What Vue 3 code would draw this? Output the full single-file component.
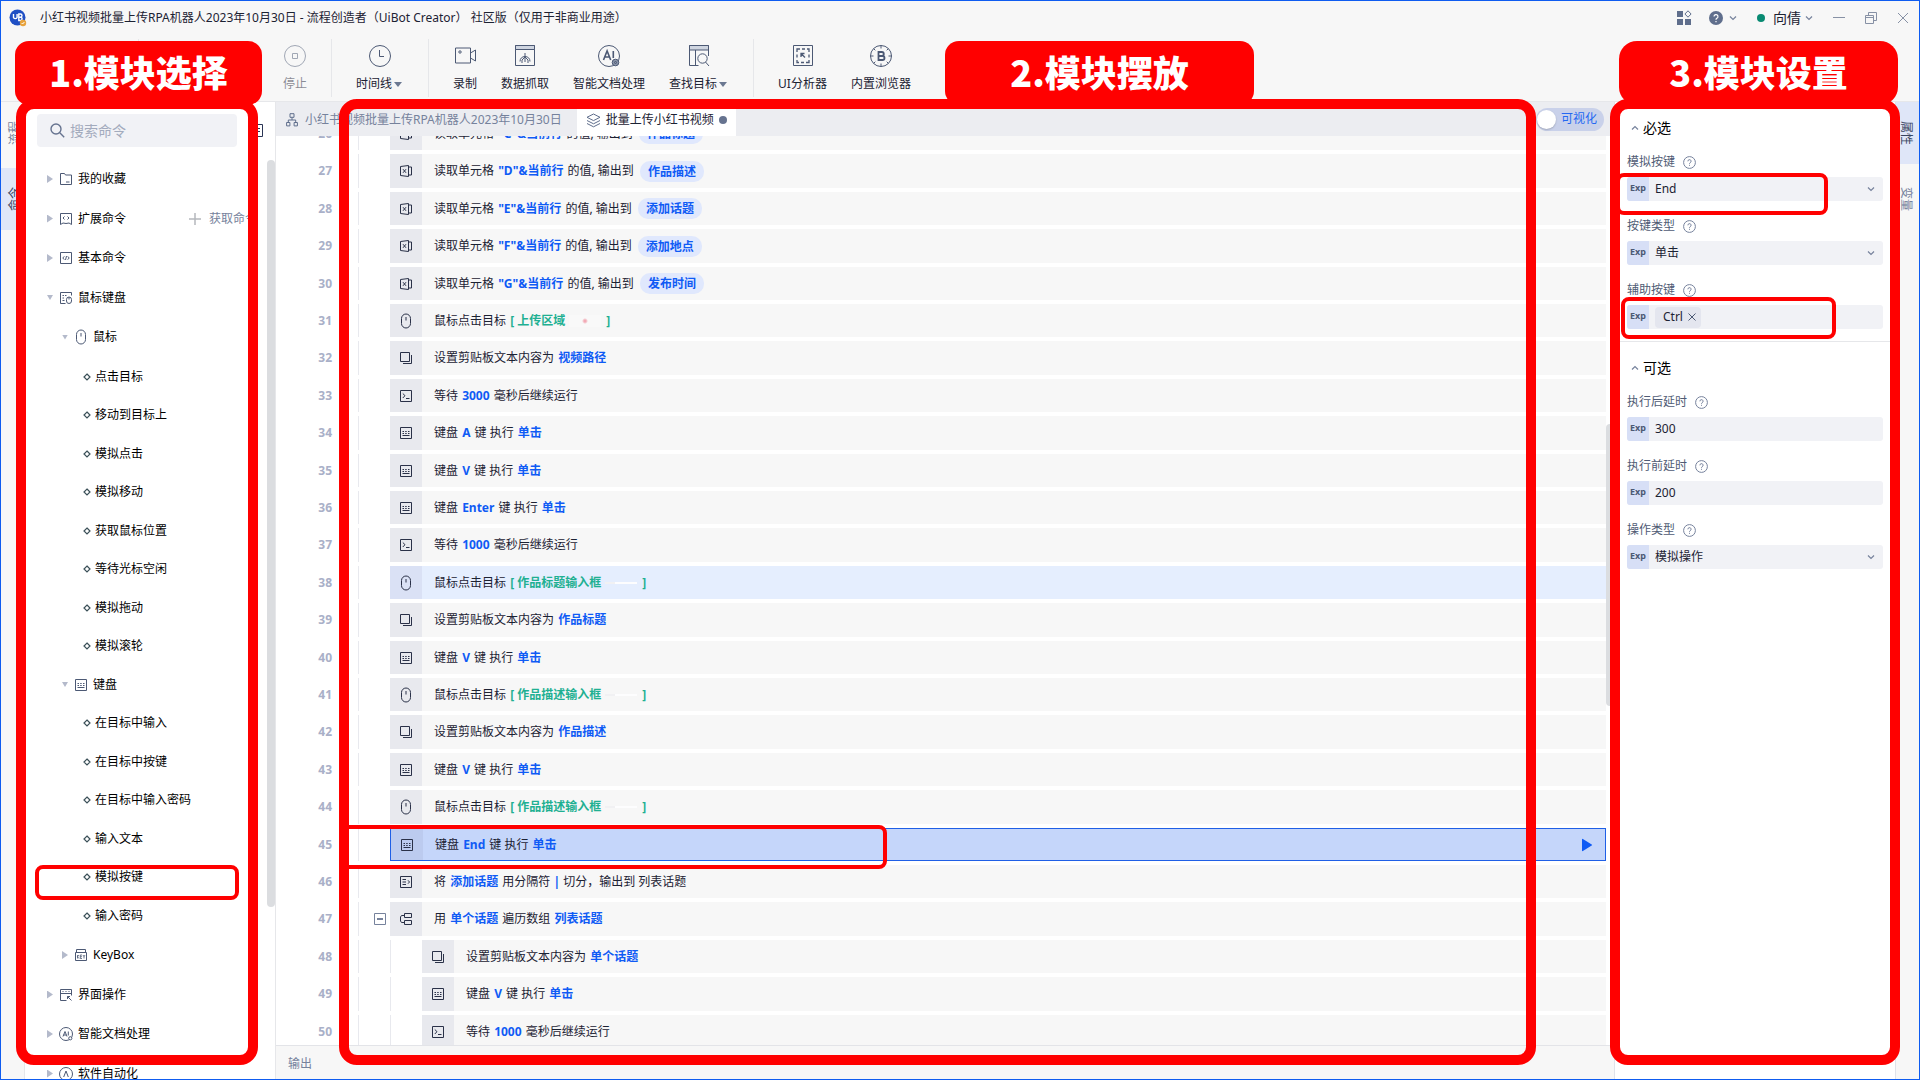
<template>
  <div class="window">
    <header class="titlebar">
      <svg class="logo" viewBox="0 0 18 18">
        <circle cx="8.5" cy="8.5" r="8" fill="#1f4fc4" />
        <path d="M4.5 5v3.5a2 2 0 0 0 3.6 0V5M9.8 11.5V5h1.6a1.6 1.6 0 0 1 0 3.2H9.8h2a1.7 1.7 0 0 1 0 3.3z" fill="none" stroke="#fff" stroke-width="1.4" />
        <circle cx="14" cy="14" r="3.2" fill="#e8a33d" />
        <path d="m12.6 14 1 1 1.8-2" fill="none" stroke="#fff" />
      </svg>
      <h1 class="title">小红书视频批量上传RPA机器人2023年10月30日 - 流程创造者（UiBot Creator） 社区版（仅用于非商业用途）</h1>
      <div class="title-actions">
        <button class="plain" aria-label="apps">
          <svg width="16" height="16" viewBox="0 0 16 16" fill="#5f6e8c">
            <path d="M1 1h6v6H1zM1 9h6v6H1zM9 9h6v6H9z" />
            <path d="m12 .8 3.1 3.2L12 7.2 8.9 4z" fill="none" stroke="#5f6e8c" />
          </svg>
        </button>
        <button class="plain help" aria-label="help">
          <svg width="14" height="14" viewBox="0 0 14 14">
            <circle cx="7" cy="7" r="7" fill="#5f6e8c" />
            <path d="M5 5.6a2 2 0 1 1 2.8 1.8c-.6.3-.8.5-.8 1.3M7 10v1.2" fill="none" stroke="#fff" stroke-width="1.2" />
          </svg>
          <svg class="chev" viewBox="0 0 8 8" v-html="icons.down"></svg>
        </button>
        <button class="plain user">
          <i class="online"></i>向倩
          <svg class="chev" viewBox="0 0 8 8" v-html="icons.down"></svg>
        </button>
        <button class="plain win" aria-label="minimize">
          <svg width="12" height="12" viewBox="0 0 12 12"><path d="M0 5.5h12" /></svg>
        </button>
        <button class="plain win" aria-label="restore">
          <svg width="12" height="12" viewBox="0 0 12 12"><path d="M.5 3.5h8v8h-8zM.5 5.5h8M3.5 3V.5h8v8H9" /></svg>
        </button>
        <button class="plain win" aria-label="close">
          <svg width="12" height="12" viewBox="0 0 12 12"><path d="m1 1 10 10M11 1 1 11" /></svg>
        </button>
      </div>
    </header>

    <nav class="toolbar">
      <i class="sep"></i>
      <span class="tool-slot"></span>
      <template v-for="(tool, i) in tools" :key="i">
        <i v-if="tool.sep" class="sep"></i>
        <button v-else class="tool" :class="{ disabled: tool.disabled }">
          <svg viewBox="0 0 24 24" v-html="icons[tool.icon]"></svg>
          <span class="tool-label">{{ tool.label }}<i v-if="tool.menu" class="tri"></i></span>
        </button>
      </template>
    </nav>

    <div class="body">
      <div class="rail rail-left">
        <button class="rail-tab">流程</button>
        <button class="rail-tab active">命令</button>
      </div>

      <aside class="commands">
        <div class="search-row">
          <label class="search">
            <svg width="15" height="15" viewBox="0 0 15 15" fill="none" stroke="#66738f" stroke-width="1.4">
              <circle cx="6" cy="6" r="5" /><path d="m9.8 9.8 4.4 4.4" />
            </svg>
            <input type="text" placeholder="搜索命令" aria-label="搜索命令" />
          </label>
          <button class="plain collapse" aria-label="collapse">
            <svg width="13" height="13" viewBox="0 0 13 13"><path d="M.5.5h12v12H.5zM5 4.500h5M5 7.500h5" /></svg>
          </button>
        </div>
        <ul class="tree">
          <li v-for="node in tree" :key="node.label" class="tree-row" :class="['level-' + node.level, node.level < 3 ? 'group' : 'leaf']">
            <i v-if="node.level < 3" class="caret" :class="{ open: node.open }"></i>
            <svg v-if="node.level < 3" class="node-icon" viewBox="0 0 12 12" v-html="icons[node.icon]"></svg>
            <svg v-else class="diamond" viewBox="0 0 8 8"><path d="m4 1 3 3-3 3-3-3z" /></svg>
            <span>{{ node.label }}</span>
            <button v-if="node.action" class="plain get-more">
              <svg width="12" height="12" viewBox="0 0 12 12"><path d="M6 0v12M0 6h12" /></svg>
              {{ node.action }}
            </button>
          </li>
        </ul>
        <i class="scrollbar side-bar"></i>
      </aside>

      <main class="editor">
        <div class="tabs">
          <button class="tab">
            <svg width="12" height="14" viewBox="0 0 12 14"><path d="M4 .7h4v3.600H4zM.6 9.500h3.300v3.400H.6zM8.100 9.500h3.300v3.400H8.100zM6 4.300V7M2.300 9.500V7h7.400v2.500" /></svg>
            小红书视频批量上传RPA机器人2023年10月30日
          </button>
          <button class="tab current">
            <svg width="15" height="15" viewBox="0 0 15 15"><path d="m7.500 1 6.500 3.300-6.500 3.300L1 4.300zM1 7.500l6.500 3.300L14 7.500M1 10.500l6.500 3.300 6.500-3.300" /></svg>
            批量上传小红书视频
            <i class="unsaved"></i>
          </button>
          <label class="visual"><input type="checkbox" />可视化</label>
        </div>

        <div class="canvas">
          <ol class="lines">
            <li v-for="line in lines" :key="line.no" class="line" :class="line.state">
              <span class="no">{{ line.no }}</span>
              <span class="gutter">
                <button v-if="line.fold" class="plain fold" aria-label="fold">
                  <svg width="12" height="12" viewBox="0 0 12 12"><path d="M.5.5h11v11H.5z" /><path d="M3 6h6" stroke-width="2" /></svg>
                </button>
              </span>
              <span v-if="line.nested" class="gutter nested"></span>
              <div class="block">
                <span class="block-icon">
                  <svg viewBox="0 0 12 12" v-html="icons[line.icon]"></svg>
                </span>
                <p class="text">
                  <span v-for="(part, i) in line.parts" :key="i" :class="part[1]">{{ part[0] }}</span>
                </p>
                <button v-if="line.state === 'selected'" class="plain run" aria-label="run">
                  <svg width="12" height="14" viewBox="0 0 12 14"><path d="M1 1.500v11a.6.6 0 0 0 .9.500l8.800-5.400a.7.7 0 0 0 0-1.200L1.900 1a.6.6 0 0 0-.9.500z" fill="#0f5bf5" /></svg>
                </button>
              </div>
            </li>
          </ol>
          <i class="scrollbar editor-bar"></i>
        </div>
        <footer class="output">输出</footer>
      </main>

      <aside class="props">
        <section v-for="group in groups" :key="group.title" class="prop-group">
          <h2><svg class="chev up" viewBox="0 0 8 8" v-html="icons.down"></svg>{{ group.title }}</h2>
          <div v-for="field in group.fields" :key="field.id" class="field">
            <div class="field-label">
              <label :for="field.id">{{ field.label }}</label>
              <svg width="13" height="13" viewBox="0 0 13 13" fill="none" stroke="#76829c">
                <circle cx="6.500" cy="6.500" r="5.900" />
                <path d="M4.900 5.300a1.600 1.600 0 1 1 2.300 1.400c-.5.300-.7.500-.7 1.100M6.500 8.800v1" />
              </svg>
            </div>
            <div class="control">
              <span class="exp">Exp</span>
              <template v-if="field.type === 'select'">
                <select :id="field.id"><option>{{ field.value }}</option></select>
                <svg class="chev" viewBox="0 0 8 8" v-html="icons.down"></svg>
              </template>
              <template v-else-if="field.type === 'tags'">
                <span class="tag">{{ field.value }}
                  <button class="plain" aria-label="remove"><svg width="8" height="8" viewBox="0 0 8 8"><path d="m.5.500 7 7M7.500.500l-7 7" /></svg></button>
                </span>
                <input :id="field.id" type="text" />
              </template>
              <input v-else :id="field.id" type="text" :value="field.value" />
            </div>
          </div>
        </section>
      </aside>

      <div class="rail rail-right">
        <button class="rail-tab active">属性</button>
        <button class="rail-tab">变量</button>
      </div>
    </div>

    <!-- tutorial marks over the window -->
    <div class="marks">
      <div class="badge badge-1">1.模块选择</div>
      <div class="badge badge-2">2.模块摆放</div>
      <div class="badge badge-3">3.模块设置</div>
      <i class="frame frame-1"></i>
      <i class="box box-command"></i>
      <i class="box box-line"></i>
      <i class="frame frame-2"></i>
      <i class="box box-key"></i>
      <i class="box box-modifier"></i>
      <i class="frame frame-3"></i>
    </div>
  </div>
</template>

<script setup>
const icons = {
  down: '<path d="m1 2.500 3 3 3-3"/>',
  stop: '<circle cx="12" cy="12" r="10.500"/><path d="M9.500 9.500h5v5h-5z"/>',
  clock: '<circle cx="12" cy="12" r="10.500"/><path d="M11.500 6v6.500H16"/>',
  record: '<path d="M2.500 4h15v15h-15zM17.500 9l5-3v11l-5-3"/><circle cx="7" cy="8" r="1.200"/>',
  grab: '<path d="M2.500 1.500h19v20h-19z"/><path d="M2.500 1.500h19v4h-19z" fill="#cfd5e0"/><path d="M12 9v5M9 19v-3l3-3 3 3v3M12 14v4M7 17.500c0-3 2-5 5-5s5 2 5 5"/>',
  ai: '<circle cx="12" cy="12" r="10.500"/><path d="m6.500 16 3.600-9 3.600 9M7.700 13h4.800M16.300 7v7" stroke-width="1.600"/><circle cx="18.500" cy="18.500" r="3.300" fill="#8a94a8"/><circle cx="18.500" cy="18.500" r="1"/>',
  find: '<path d="M21.500 12V1.500h-19v20h9M8.500 6v15.500"/><path d="M2.500 1.500h19v4.500h-19z" fill="#cfd5e0"/><circle cx="15.500" cy="14.500" r="4.700"/><path d="m18.500 18 3.500 4"/>',
  analyze: '<path d="M2.500 1.500h19v20h-19z"/><path d="M6 8V5h3M11 5h3M16 5h2v3M18 10.500v3M18 16v2.500h-3M13 18.500h-3M8 18.500H6V16M6 13.500v-3M10 13V9.500h3.500M10 9.500l4 4" stroke-width="1.300"/>',
  browser: '<circle cx="12" cy="12" r="10.500"/><path d="M9.500 8h3.300a2 2 0 0 1 0 4H9.500zM9.500 12h4a2 2 0 0 1 0 4h-4z" stroke-width="1.800"/><path d="M12 1.500v3M12 19.500v3M1.500 12h3M19.500 12h3M4.600 4.600l1.700 1.700M17.700 17.700l1.700 1.700M4.600 19.400l1.700-1.700M17.700 6.300l1.700-1.700"/>',
  folder: '<path d="M.5.500h4l1 1.500h6v9.500H.5zM6 9h3.500"/>',
  extend: '<path d="M.5.500h11v11l-2.500-1.500-3 .500-3-.500L.5 11.500zM4.500 3.500 3 5l1.500 1.500M7.500 3.500 9 5 7.500 6.500"/>',
  basic: '<path d="M.5.500h11v11H.5zM4.300 4.300 2.800 6l1.500 1.700M7.700 4.300 9.200 6 7.700 7.700M6.500 4l-1 4"/>',
  keymouse: '<path d="M5.500 11.500h-5V.500h11v3M2.500 3.500h1.500M5 3.500h1.500M2.500 6h1.500M2.500 8.500h2"/><rect x="6.500" y="5" width="5" height="6.500" rx="2.500"/><path d="M9 5v2.500"/>',
  mouse: '<rect x="1.500" y="-1" width="9" height="14" rx="4.500"/><path d="M6 2v3.500"/>',
  keyboard: '<path d="M.5.500h11v11H.5z"/><path d="M2.500 4.500h1.500M5.200 4.500h1.500M8 4.500h1.500M2.500 6.500h1.500M5.200 6.500h1.500M8 6.500h1.500M2.500 8.500h7"/>',
  keybox: '<path d="M.5 3.500h11v8H.5zM1.500 3.500V.500h9v3"/><path d="M2.500 6v3.500M2.500 7.800l1.500-1.800M2.500 7.800l1.500 1.700M7 6H5.300v3.500H7M5.300 7.700H7M8 6l1 1.700L10 6M9 7.700v1.800" stroke-width=".8"/>',
  ui: '<path d="M6.500 11.500h-6V.500h11v6M.5 4.500h11M2.500 2.500h1M5.500 2.500h1M8.500 2.500h1M7.500 7.500l4 4M7.500 10V7.500H10"/>',
  doc: '<circle cx="6" cy="6" r="6.500"/><path d="m3 8.500 2-5 2 5M3.700 7h2.600M8.300 3.500v4"/><circle cx="10.300" cy="10.300" r="1.600" fill="#fff"/>',
  soft: '<circle cx="6" cy="6" r="6.500"/><path d="m3.700 9 2.300-6 2.300 6"/>',
  excel: '<path d="M8.500.500l-8 1v9l8 1zM8.500 2h3v8h-3"/><path d="m3 4.200 3 3.600M6 4.200 3 7.800"/>',
  clip: '<path d="M.5.500h9v9h-9zM3 11.500h8.500V3"/>',
  wait: '<path d="M.5.500h11v11H.5zM2.800 3.500 5 5.700 2.800 8M6 8.500h3.500"/>',
  split: '<path d="M.5.500h11v11H.5zM2.500 3.500h3.500M2.500 6h3.500M2.500 8.500h3.500M8 4.300 9.500 6 8 7.700"/>',
  loop: '<path d="M4.500.500h7v4h-7zM4.500 7.500h7v4h-7zM4.500 2.500h-3l-1 1.500v4l1 1.500h3"/>'
}

const tools = [
  { label: '停止', icon: 'stop', disabled: true },
  { sep: true },
  { label: '时间线', icon: 'clock', menu: true },
  { sep: true },
  { label: '录制', icon: 'record' },
  { label: '数据抓取', icon: 'grab' },
  { label: '智能文档处理', icon: 'ai' },
  { label: '查找目标', icon: 'find', menu: true },
  { sep: true },
  { label: 'UI分析器', icon: 'analyze' },
  { label: '内置浏览器', icon: 'browser' }
]

const leaf = (label) => ({ level: 3, label })

const tree = [
  { level: 1, label: '我的收藏', icon: 'folder' },
  { level: 1, label: '扩展命令', icon: 'extend', action: '获取命令' },
  { level: 1, label: '基本命令', icon: 'basic' },
  { level: 1, label: '鼠标键盘', icon: 'keymouse', open: true },
  { level: 2, label: '鼠标', icon: 'mouse', open: true },
  ...['点击目标', '移动到目标上', '模拟点击', '模拟移动', '获取鼠标位置', '等待光标空闲', '模拟拖动', '模拟滚轮'].map(leaf),
  { level: 2, label: '键盘', icon: 'keyboard', open: true },
  ...['在目标中输入', '在目标中按键', '在目标中输入密码', '输入文本', '模拟按键', '输入密码'].map(leaf),
  { level: 2, label: 'KeyBox', icon: 'keybox' },
  { level: 1, label: '界面操作', icon: 'ui' },
  { level: 1, label: '智能文档处理', icon: 'doc' },
  { level: 1, label: '软件自动化', icon: 'soft' }
]

const read = (cell, name) => ({
  icon: 'excel',
  parts: [['读取单元格 '], [`"${cell}"&当前行`, 'var'], [' 的值, 输出到 '], [name, 'pill']]
})
const click = (target, state) => ({
  icon: 'mouse',
  state,
  parts: [['鼠标点击目标 '], ['[ ' + target, 'target'], ['', 'thumb'], [']', 'target']]
})
const clip = (name) => ({ icon: 'clip', parts: [['设置剪贴板文本内容为 '], [name, 'var']] })
const wait = (ms) => ({ icon: 'wait', parts: [['等待 '], [ms, 'var'], [' 毫秒后继续运行']] })
const press = (key, state) => ({
  icon: 'keyboard',
  state,
  parts: [['键盘 '], [key, 'var'], [' 键 执行 '], ['单击', 'var']]
})

const lines = [
  read('C', '作品标题'),
  read('D', '作品描述'),
  read('E', '添加话题'),
  read('F', '添加地点'),
  read('G', '发布时间'),
  { ...click('上传区域'), parts: [['鼠标点击目标 '], ['[ 上传区域', 'target'], ['', 'thumb dot'], [']', 'target']] },
  clip('视频路径'),
  wait('3000'),
  press('A'),
  press('V'),
  press('Enter'),
  wait('1000'),
  click('作品标题输入框', 'hover'),
  clip('作品标题'),
  press('V'),
  click('作品描述输入框'),
  clip('作品描述'),
  press('V'),
  click('作品描述输入框'),
  press('End', 'selected'),
  { icon: 'split', parts: [['将 '], ['添加话题', 'var'], [' 用分隔符 '], ['|', 'bar'], [' 切分，输出到 列表话题']] },
  { icon: 'loop', fold: true, parts: [['用 '], ['单个话题', 'var'], [' 遍历数组 '], ['列表话题', 'var']] },
  { ...clip('单个话题'), nested: true },
  { ...press('V'), nested: true },
  { ...wait('1000'), nested: true }
].map((line, i) => ({ no: 26 + i, ...line }))

const groups = [
  {
    title: '必选',
    fields: [
      { id: 'key', label: '模拟按键', type: 'select', value: 'End' },
      { id: 'keyType', label: '按键类型', type: 'select', value: '单击' },
      { id: 'modifier', label: '辅助按键', type: 'tags', value: 'Ctrl' }
    ]
  },
  {
    title: '可选',
    fields: [
      { id: 'delayAfter', label: '执行后延时', type: 'text', value: '300' },
      { id: 'delayBefore', label: '执行前延时', type: 'text', value: '200' },
      { id: 'mode', label: '操作类型', type: 'select', value: '模拟操作' }
    ]
  }
]
</script>

<style>
body {
  margin: 0;
  overflow: hidden;
}
</style>

<style scoped>
* {
  box-sizing: border-box;
}

.window {
  position: relative;
  display: flex;
  flex-direction: column;
  height: 100vh;
  border: 1px solid #0f5cf0;
  overflow: hidden;
  background: #f7f7f7;
  color: #1c2233;
  font: 12px/16px "Noto Sans", "Noto Sans CJK SC", sans-serif;
}

button,
input,
select {
  font: inherit;
  color: inherit;
  border: 0;
  padding: 0;
  background: none;
  outline: none;
}

i {
  display: block;
}

ul,
ol,
p,
h1,
h2 {
  margin: 0;
  padding: 0;
  list-style: none;
  font-weight: normal;
}

svg {
  display: block;
  flex-shrink: 0;
}

.plain {
  display: flex;
  align-items: center;
}

.chev {
  width: 8px;
  height: 8px;
  fill: none;
  stroke: #76829c;
  stroke-width: 1.200;
}

.titlebar {
  display: flex;
  align-items: center;
  flex-shrink: 0;
  height: 34px;
  padding: 0 10px 0 8px;
}

.logo {
  width: 18px;
  height: 18px;
}

.title {
  flex: 1;
  margin-left: 13px;
  font-size: 12px;
  line-height: 18px;
  white-space: nowrap;
}

.title-actions {
  display: flex;
  align-items: center;
  gap: 20px;
}

.help {
  gap: 6px;
  margin-left: -3px;
}

.user {
  gap: 4px;
  font-size: 14px;
}

.online {
  width: 8px;
  height: 8px;
  margin-right: 4px;
  border-radius: 50%;
  background: #088a72;
}

.win {
  width: 12px;
}

.win svg {
  fill: none;
  stroke: #8791a5;
}

.toolbar {
  display: flex;
  gap: 24px;
  flex-shrink: 0;
  height: 67px;
  padding: 4px 0 0 137px;
  border-bottom: 1px solid #e6e7ea;
}

.sep {
  width: 1px;
  height: 58px;
  background: #e6e7ea;
}

.tool-slot {
  width: 96px;
}

.tool {
  display: flex;
  flex-direction: column;
  align-items: center;
  gap: 8px;
  padding-top: 5px;
}

.tool svg {
  width: 24px;
  height: 24px;
  fill: none;
  stroke: #4c5974;
}

.tool-label {
  display: flex;
  align-items: center;
  white-space: nowrap;
}

.disabled {
  opacity: 0.5;
}

.tri {
  margin: 0 2px;
  border: 4px solid transparent;
  border-top: 5px solid #6b7891;
  border-bottom: 0;
}

.body {
  display: flex;
  flex: 1;
  min-height: 0;
}

.rail {
  display: flex;
  flex-direction: column;
  gap: 4px;
  flex-shrink: 0;
  width: 24px;
  color: #76829c;
}

.rail-left {
  border-right: 1px solid #e6e7ea;
}

.rail-right {
  border-left: 1px solid #dfe2ea;
}

.rail-tab {
  height: 62px;
  width: 100%;
  padding-right: 4px;
  writing-mode: vertical-rl;
  text-orientation: sideways;
}

.rail-left .rail-tab {
  transform: rotate(180deg);
}

.rail-tab.active {
  background: #dfe6f8;
  color: #38445f;
}

.commands {
  position: relative;
  flex-shrink: 0;
  width: 251px;
  border-right: 1px solid #e6e7ea;
  background: #fff;
  overflow: hidden;
  color: #000;
}

.search-row {
  display: flex;
  align-items: center;
  gap: 13px;
  padding: 12px;
}

.search {
  display: flex;
  align-items: center;
  gap: 5px;
  width: 200px;
  height: 33px;
  padding-left: 13px;
  border-radius: 4px;
  background: #f1f2f6;
}

.search input {
  width: 150px;
  font-size: 14px;
}

.search input::placeholder {
  color: #a3abbd;
}

.collapse svg {
  fill: none;
  stroke: #2a3555;
}

.tree-row {
  display: flex;
  align-items: center;
  height: 39px;
  white-space: nowrap;
}

.group:nth-child(odd) {
  height: 40px;
}

.leaf:nth-child(odd) {
  height: 38px;
}

.level-1 {
  padding-left: 22px;
}

.level-2 {
  padding-left: 37px;
}

.level-3 {
  gap: 4px;
  padding-left: 58px;
}

.caret {
  width: 6px;
  height: 8px;
  margin-right: 7px;
  background: #b4bacb;
  clip-path: polygon(0 0, 100% 50%, 0 100%);
}

.caret.open {
  height: 5px;
  clip-path: polygon(0 0, 100% 0, 50% 100%);
}

.node-icon {
  width: 12px;
  height: 12px;
  margin-right: 6px;
  overflow: visible;
  fill: none;
  stroke: #4c5974;
}

.diamond {
  width: 8px;
  height: 8px;
  fill: none;
  stroke: #3b5058;
  stroke-width: 1.200;
}

.get-more {
  gap: 8px;
  margin-left: 63px;
  color: #76829c;
}

.get-more svg {
  stroke: #b5b8bd;
  stroke-width: 1.500;
}

.scrollbar {
  position: absolute;
  width: 8px;
  border-radius: 4px;
  background: #dbdde0;
}

.side-bar {
  top: 58px;
  right: 0;
  height: 747px;
}

.editor {
  display: flex;
  flex-direction: column;
  flex: 1;
  min-width: 0;
}

.tabs {
  display: flex;
  flex-shrink: 0;
  height: 34px;
  background: #ecedf1;
}

.tab {
  display: flex;
  align-items: center;
  gap: 7px;
  padding: 2px 15px 0 10px;
  color: #76829c;
  white-space: nowrap;
}

.tab svg {
  fill: none;
  stroke: #5f6e8c;
}

.tab.current {
  gap: 5px;
  padding: 2px 9px 0;
  background: #fff;
  color: #1c2233;
}

.unsaved {
  width: 8px;
  height: 8px;
  border-radius: 50%;
  background: #66738f;
}

.visual {
  display: flex;
  align-items: center;
  align-self: center;
  gap: 5px;
  height: 23px;
  margin: 0 10px 0 auto;
  padding: 0 7px 0 1px;
  border-radius: 12px;
  background: #c9d1ea;
  color: #2468f2;
}

.visual input {
  appearance: none;
  width: 19px;
  height: 19px;
  margin: 0;
  border-radius: 50%;
  background: #fff;
  box-shadow: 0 1px 2px rgba(0, 0, 0, 0.2);
}

.canvas {
  position: relative;
  flex: 1;
  min-height: 0;
  padding-right: 8px;
  background: #fff;
  overflow: hidden;
}

/* the list stands scrolled part-way into its first line */
.lines {
  margin-top: -19px;
}

.line {
  display: flex;
  height: 33px;
  margin-bottom: 4px;
}

.line:nth-child(5n + 2),
.line:nth-child(5n + 4) {
  height: 34px;
}

.no {
  align-self: center;
  width: 56px;
  margin-right: 26px;
  color: #a9b0c8;
  font-weight: bold;
  text-align: right;
}

.gutter {
  display: flex;
  align-items: center;
  justify-content: flex-end;
  flex-shrink: 0;
  width: 32px;
  padding-right: 4px;
  border-left: 1px solid #e8e9ee;
}

.fold svg {
  fill: none;
  stroke: #76829c;
}

.block {
  display: flex;
  flex: 1;
  align-items: center;
  min-width: 0;
  background: #f7f7f7;
}

.block-icon {
  display: flex;
  align-items: center;
  justify-content: center;
  align-self: stretch;
  width: 32px;
  background: #e8e9ee;
}

.block-icon svg {
  width: 12px;
  height: 12px;
  overflow: visible;
  fill: none;
  stroke: #2a3148;
}

.text {
  display: flex;
  align-items: center;
  margin-left: 12px;
  white-space: pre;
}

.var {
  margin: 0 1px;
  color: #0f5bf5;
  font-weight: bold;
}

.bar {
  color: #0f5bf5;
  font-weight: bold;
}

.pill {
  height: 21px;
  margin-left: 3px;
  padding: 0 8px;
  border-radius: 10px;
  background: #e0e8fd;
  color: #0f5bf5;
  font-weight: bold;
  line-height: 21px;
}

.target {
  margin-left: 1px;
  color: #1fb092;
  font-weight: bold;
}

.thumb {
  width: 32px;
  height: 2px;
  margin: 0 4px;
  background: linear-gradient(to right, #f1f1f3 30%, #fdfdfe 30%);
}

.thumb.dot {
  height: 12px;
  background: radial-gradient(circle, #f2aab5 1px, #f9f9f9 3px);
}

.hover .block {
  background: #e5eefe;
}

.hover .block-icon {
  background: #dae1f5;
}

.selected .block {
  border: 1px solid #1f5fe6;
  background: #c5d6fa;
}

.selected .block-icon {
  background: #bccbef;
}

.run {
  margin: 0 12px 0 auto;
}

.editor-bar {
  top: 288px;
  right: 0;
  height: 282px;
}

.output {
  flex-shrink: 0;
  height: 34px;
  padding: 10px 12px;
  border-top: 1px solid #e3e4e8;
  color: #76829c;
}

.props {
  flex-shrink: 0;
  width: 281px;
  border-left: 1px solid #dfe2ea;
  background: #fff;
}

.prop-group {
  padding: 16px 12px 0;
}

.prop-group + .prop-group {
  border-top: 1px solid #e6e7ea;
}

.prop-group h2 {
  display: flex;
  align-items: center;
  gap: 4px;
  height: 20px;
  margin-bottom: 14px;
  padding-left: 4px;
  color: #000;
  font-size: 14px;
}

.chev.up {
  transform: rotate(180deg);
}

.field {
  padding-bottom: 15px;
}

.field:last-child {
  padding-bottom: 12px;
}

.field-label {
  display: flex;
  align-items: center;
  gap: 8px;
  height: 20px;
  margin-bottom: 5px;
  color: #4f5b74;
}

.control {
  display: flex;
  align-items: center;
  height: 24px;
  padding-right: 8px;
  border-radius: 3px;
  background: #f1f2f6;
  overflow: hidden;
}

.exp {
  align-self: stretch;
  width: 22px;
  margin-right: 6px;
  background: #d7dff6;
  color: #4c5974;
  font-size: 9px;
  font-weight: bold;
  line-height: 22px;
  text-align: center;
}

.control select,
.control input {
  appearance: none;
  flex: 1;
  min-width: 0;
}

.tag {
  display: flex;
  align-items: center;
  gap: 5px;
  height: 21px;
  padding: 0 5px 0 8px;
  border-radius: 4px;
  background: #e4e6ef;
}

.tag svg {
  fill: none;
  stroke: #4c5974;
}

.marks {
  position: absolute;
  inset: -1px;
  pointer-events: none;
}

.marks > * {
  position: absolute;
}

.badge {
  top: 41px;
  height: 64px;
  border-radius: 14px;
  background: #f00;
  color: #fff;
  font: 900 36px/60px "Noto Sans CJK SC", sans-serif;
  text-align: center;
  white-space: nowrap;
}

.badge-1 {
  left: 15px;
  width: 247px;
}

.badge-2 {
  left: 945px;
  width: 309px;
}

.badge-3 {
  right: 22px;
  width: 279px;
  border-radius: 18px;
}

.frame {
  top: 99px;
  bottom: 15px;
  border: 10px solid #f00;
  border-radius: 18px;
}

.frame-1 {
  left: 16px;
  width: 242px;
}

.frame-2 {
  left: 339px;
  right: 384px;
}

.frame-3 {
  right: 20px;
  width: 290px;
}

.box {
  border: 4px solid #f00;
  border-radius: 8px;
}

.box-command {
  left: 35px;
  top: 865px;
  width: 204px;
  height: 35px;
}

.box-line {
  left: 341px;
  top: 825px;
  width: 546px;
  height: 44px;
}

.box-key {
  right: 92px;
  top: 173px;
  width: 212px;
  height: 42px;
}

.box-modifier {
  right: 84px;
  top: 297px;
  width: 215px;
  height: 42px;
}
</style>
